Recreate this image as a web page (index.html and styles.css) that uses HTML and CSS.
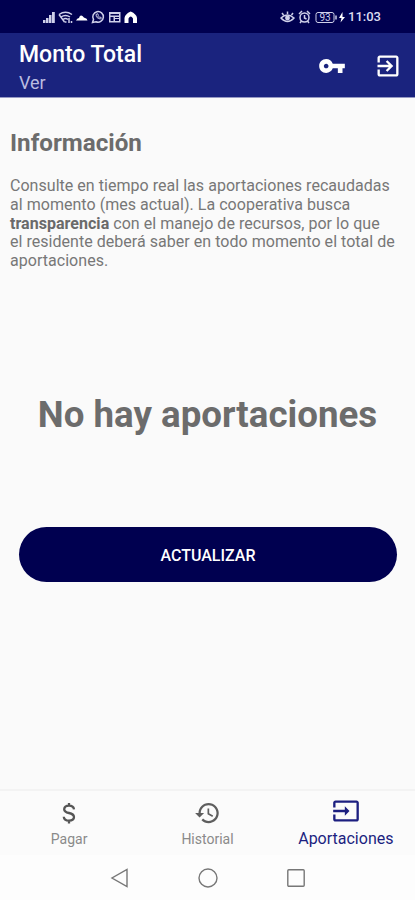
FILE: index.html
```html
<!DOCTYPE html>
<html lang="es">
<head>
<meta charset="utf-8">
<title>Monto Total</title>
<link rel="stylesheet" href="styles.css">
</head>
<body>
<div class="screen">
  <div class="status">
    <svg class="status-left" width="100" height="16" viewBox="0 0 100 16">
      <g fill="#cfd0ea">
        <path d="M1 11h2.500v3H1zM4 9h2.500v5H4zM7 6h2.500v8H7zM10 3h2.800v11H10z"/>
        <path d="M67 3v10.500h11.500V3zm1.500 2h8.500v1.500h-8.500zm0 3h3v4h-3zm4.500 0h4v1h-4zm0 2h4v2h-4z" fill-rule="evenodd"/>
      </g>
      <g fill="none" stroke="#cfd0ea" stroke-width="1.500">
        <path d="M17 5.500q6.500-4.500 13 0M19 8q4.500-3 9 0M21 10.500q2.500-1.800 5 0M17 5.500l5.500 7.500"/>
        <path d="M22.500 13h2M27 9v5M29.500 12v2"/>
        <path d="M50.500 13.500l1-3A5.300 5.300 0 1 1 54 12.700z"/>
        <path d="M54 5.500q0 4 4.500 4.500l1-1.200-1.700-.9-.8.700q-1-.5-1.300-1.500l.7-.8-.7-1.600z" stroke-width="1"/>
      </g>
      <path d="M34 11.500q1-2.500 3-2.500 1-3.500 3.500-2 1.500 2 2.500 2 2 .3 2.500 2.500z" fill="#fff"/>
      <path d="M82.500 14V9Q83 5 88.700 2.500Q94.500 5 95 9v5h-4V9.500q-2.300-4-4.500 0V14z" fill="#fff"/>
    </svg>
    <div class="status-right">
      <svg width="66" height="16" viewBox="0 0 66 16">
        <g fill="none" stroke="#cfd0ea" stroke-width="1.500">
          <path d="M1 9q6-6 13 0-6.500 7-13 0zM3.500 6L2 4M7.500 5V2.500M11.500 6L13 4"/>
          <circle cx="7.500" cy="9" r="1.700" fill="#cfd0ea"/>
          <circle cx="24.500" cy="8.500" r="4.500"/>
          <path d="M24.500 6v3l2 1M19 5l3-3M30 5l-3-3M21.500 12l-1.500 2M27.500 12l1.500 2"/>
          <rect x="36" y="3.500" width="18" height="10" rx="2" stroke-width="1"/>
          <path d="M56 6.500v4"/>
        </g>
        <text class="battery" x="45" y="12">93</text>
        <path d="M62.500 3L59 9h2.500l-1 4.500L65 8h-2.500z" fill="#fff"/>
      </svg>
      <span class="clock">11:03</span>
    </div>
  </div>
  <header class="appbar">
    <div class="titles">
      <h1>Monto Total</h1>
      <p>Ver</p>
    </div>
    <div class="actions">
      <svg width="28" height="28" viewBox="0 0 24 24"><path d="M12.650 10C11.830 7.670 9.610 6 7 6c-3.310 0-6 2.690-6 6s2.690 6 6 6c2.610 0 4.830-1.670 5.650-4H17v4h4v-4h2v-4H12.650zM7 14c-1.100 0-2-.9-2-2s.9-2 2-2 2 .9 2 2-.9 2-2 2z"/></svg>
      <svg width="28" height="28" viewBox="0 0 24 24"><path d="M10.090 15.590L11.500 17l5-5-5-5-1.410 1.410L12.670 11H3v2h9.670l-2.580 2.590zM19 3H5c-1.110 0-2 .9-2 2v4h2V5h14v14H5v-4H3v4c0 1.100.89 2 2 2h14c1.100 0 2-.9 2-2V5c0-1.100-.9-2-2-2z"/></svg>
    </div>
  </header>
  <main>
    <h2>Información</h2>
    <p class="info">Consulte en tiempo real las aportaciones recaudadas<br>al momento (mes actual). La cooperativa busca<br><b>transparencia</b> con el manejo de recursos, por lo que<br>el residente deberá saber en todo momento el total de<br>aportaciones.</p>
    <div class="total">No hay aportaciones</div>
    <button class="update">ACTUALIZAR</button>
  </main>
  <nav class="tabs">
    <div class="tab">
      <svg width="28" height="28" viewBox="0 0 28 28"><path d="M19 10.300Q18.500 6.700 14 6.700T9.200 10.200Q9.200 13 14 14T19 18Q19 21.600 14 21.600T8.800 17.700M14 4v3M14 21.500v3" fill="none" stroke="#555" stroke-width="2.300"/></svg>
      <span>Pagar</span>
    </div>
    <div class="tab">
      <svg width="27" height="28" viewBox="0 0 24 24" fill="#5e5e5e"><path d="M13 3c-4.970 0-9 4.030-9 9H1l3.890 3.890.07.14L9 12H6c0-3.870 3.130-7 7-7s7 3.130 7 7-3.130 7-7 7c-1.930 0-3.680-.79-4.940-2.060l-1.420 1.420C8.270 19.990 10.510 21 13 21c4.970 0 9-4.030 9-9s-4.030-9-9-9zm-1 5v5l4.280 2.540.72-1.210-3.500-2.080V8H12z"/></svg>
      <span>Historial</span>
    </div>
    <div class="tab active">
      <svg width="28" height="28" viewBox="0 0 24 24" fill="#1c1f80"><path d="M21 3.010H3c-1.100 0-2 .9-2 2V9h2V4.990h18v14.030H3V15H1v4.010c0 1.100.9 1.980 2 1.980h18c1.100 0 2-.88 2-1.980v-14c0-1.110-.9-2-2-2zM11 16l4-4-4-4v3H1v2h10v3z"/></svg>
      <span>Aportaciones</span>
    </div>
  </nav>
  <div class="sysnav">
    <svg width="20" height="22" viewBox="0 0 20 22"><path d="M17 2.500v17L2 11z"/></svg>
    <svg width="20" height="22" viewBox="0 0 20 22"><circle cx="10" cy="11" r="9"/></svg>
    <svg width="20" height="22" viewBox="0 0 20 22"><rect x="1.800" y="2.800" width="16.400" height="16.400" rx="1"/></svg>
  </div>
</div>
</body>
</html>
```
FILE: styles.css
```css
* { box-sizing: border-box; margin: 0; padding: 0; }
body { font-family: Roboto, sans-serif; background: #fafafa; color: #777; }
.screen { width: 415px; height: 900px; display: flex; flex-direction: column; overflow: hidden; }
.status { height: 33px; background: #000050; display: flex; justify-content: space-between; padding: 9px 34px 0 42px; }
.status-right { display: flex; gap: 2px; }
.battery { font-size: 10px; fill: #cfd0ea; text-anchor: middle; }
.clock { font-size: 13px; line-height: 16px; width: 33px; font-weight: 500; color: #dcdcf0; white-space: nowrap; }
.appbar { height: 65px; background: #1a237e; border-bottom: 1px solid #9699c3; display: flex; justify-content: space-between; padding: 0 13.500px 0 19px; }
.titles { padding-top: 8px; }
h1 { font-size: 23px; line-height: 28px; font-weight: 500; color: #fff; white-space: nowrap; }
.titles p { font-size: 18px; line-height: 22px; padding-top: 3px; color: #b9bce0; }
.actions { display: flex; align-items: center; gap: 27.500px; padding-top: 1px; fill: #fff; }
main { flex: 1; display: flex; flex-direction: column; padding: 30px 10px 0; }
h2 { font-size: 24.200px; line-height: 30px; font-weight: 700; color: #6c6c6c; }
.info { margin-top: 19px; font-size: 16px; letter-spacing: 0.035px; line-height: 18.800px; white-space: nowrap; }
.info b { color: #6a6a6a; }
.total { margin-top: 119px; text-align: center; font-size: 36.700px; line-height: 50px; font-weight: 700; color: #6c6c6c; white-space: nowrap; }
.update { margin: 87px 8px 0 9px; height: 55px; padding-top: 2px; border: 0; border-radius: 28px; background: #000050; color: #fff; font: 500 16px Roboto, sans-serif; }
.tabs { height: 66px; display: grid; grid-template-columns: repeat(3, 1fr); border-top: 2px solid #f3f3f3; background: #fbfbfb; }
.tab { display: flex; flex-direction: column; align-items: center; padding-top: 8px; color: #8a8a8a; font-size: 14px; }
.tab span { line-height: 18px; margin-top: 3px; white-space: nowrap; }
.tab.active { padding-top: 6px; color: #1c1f80; font-size: 16px; }
.tab.active span { margin-top: 5px; }
.sysnav { height: 45px; display: flex; justify-content: center; gap: 68px; padding-top: 12px; fill: none; stroke: #777; stroke-width: 1.400; background: #fdfdfd; }
```
